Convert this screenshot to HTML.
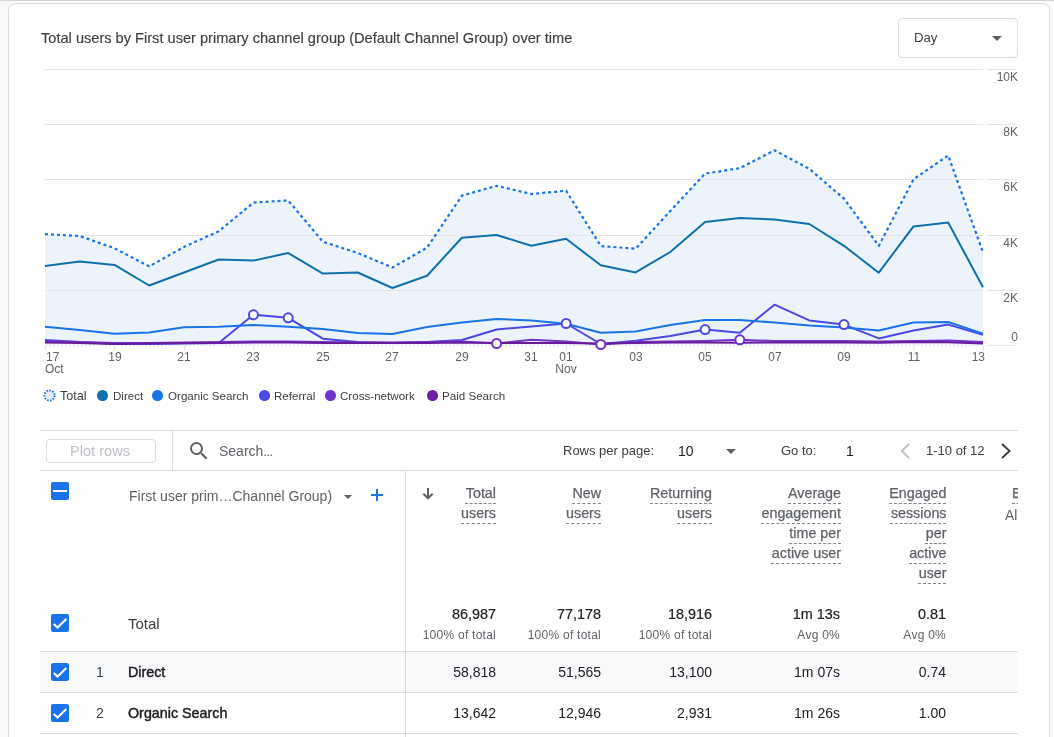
<!DOCTYPE html>
<html><head><meta charset="utf-8">
<style>
*{margin:0;padding:0;box-sizing:border-box}
html,body{width:1054px;height:737px;overflow:hidden;background:#f8f9fa;font-family:"Liberation Sans",sans-serif;color:#3c4043}
.topband{position:absolute;left:0;top:0;width:1054px;height:1px;background:#d3d4d6}
.card{position:absolute;left:8px;top:3px;width:1042px;height:760px;background:#fff;border:1px solid #dadce0;border-radius:8px}
.abs{position:absolute;white-space:nowrap;will-change:transform}
.title{left:41px;top:30px;font-size:14.6px;color:#3c4043;-webkit-text-stroke:0.15px #3c4043}
.daybtn{position:absolute;left:898px;top:18px;width:120px;height:40px;border:1px solid #dadce0;border-radius:4px}
.tri{position:absolute;width:0;height:0;border-left:5px solid transparent;border-right:5px solid transparent;border-top:5px solid #5f6368}
.ylab{font-size:12px;color:#5f6368;text-align:right;width:40px;left:978px}
.xlab{font-size:12px;color:#5f6368;text-align:center;width:30px}
.leg{font-size:11.6px;color:#3c4043;top:389px}
.dot{position:absolute;width:10.6px;height:10.6px;border-radius:50%;top:390.2px}
.hline{position:absolute;height:1px;background:#dadce0}
.vline{position:absolute;width:1px;background:#dadce0}
.cb{position:absolute;width:18px;height:18px;background:#1a73e8;border-radius:2px}
.hdr{font-size:14.3px;color:#5f6368;-webkit-text-stroke:0.25px #5f6368;text-align:right;line-height:20px}
.hdr span{text-decoration:underline dashed #80868b;text-decoration-thickness:1px;text-underline-offset:5px}
.num{font-size:14px;color:#202124;text-align:right}
.b{-webkit-text-stroke:0.2px #202124;font-size:14.4px}
.rowname{font-size:14.3px;color:#202124;-webkit-text-stroke:0.45px #202124}
.sub{font-size:12px;letter-spacing:0.25px;color:#5f6368;text-align:right}
</style></head><body>
<div class="topband"></div>
<div class="card"></div>
<div class="abs title">Total users by First user primary channel group (Default Channel Group) over time</div>
<div class="daybtn"></div>
<div class="abs" style="left:914px;top:30px;font-size:13.2px;color:#3c4043">Day</div>
<div class="tri" style="left:992px;top:36px"></div>
<svg width="1054" height="420" viewBox="0 0 1054 420" style="position:absolute;left:0;top:0">
<path d="M45.0,345.3 L45.0,234.1 L79.7,236.0 L114.5,248.2 L149.2,266.4 L184.0,246.9 L218.7,231.3 L253.4,202.6 L288.2,200.4 L322.9,241.7 L357.7,253.0 L392.4,267.5 L427.1,247.7 L461.9,195.6 L496.6,185.8 L531.4,194.0 L566.1,190.7 L600.8,246.0 L635.6,248.8 L670.3,211.0 L705.1,173.6 L739.8,168.2 L774.5,150.3 L809.3,168.8 L844.0,198.7 L878.8,245.8 L913.5,179.3 L948.2,155.4 L983.0,252.4 L983.0,345.3 Z" fill="#edf3fd"/>
<rect x="45" y="69.0" width="938" height="1" fill="#e2e4e8"/>
<rect x="987" y="69.0" width="30" height="1" fill="#e3e3e3"/>
<rect x="45" y="124.0" width="938" height="1" fill="#e2e4e8"/>
<rect x="987" y="124.0" width="30" height="1" fill="#e3e3e3"/>
<rect x="45" y="179.0" width="938" height="1" fill="#e2e4e8"/>
<rect x="987" y="179.0" width="30" height="1" fill="#e3e3e3"/>
<rect x="45" y="235.0" width="938" height="1" fill="#e2e4e8"/>
<rect x="987" y="235.0" width="30" height="1" fill="#e3e3e3"/>
<rect x="45" y="290.0" width="938" height="1" fill="#e2e4e8"/>
<rect x="987" y="290.0" width="30" height="1" fill="#e3e3e3"/>
<rect x="987" y="344.8" width="30" height="1" fill="#e3e3e3"/>
<line x1="45" y1="345.8" x2="983" y2="345.8" stroke="#e3e5e8" stroke-width="1" stroke-dasharray="2 2"/>
<rect x="44.9" y="345.5" width="1" height="5" fill="#e0e0e0"/>
<rect x="114.4" y="345.5" width="1" height="5" fill="#e0e0e0"/>
<rect x="183.9" y="345.5" width="1" height="5" fill="#e0e0e0"/>
<rect x="253.3" y="345.5" width="1" height="5" fill="#e0e0e0"/>
<rect x="322.8" y="345.5" width="1" height="5" fill="#e0e0e0"/>
<rect x="392.3" y="345.5" width="1" height="5" fill="#e0e0e0"/>
<rect x="461.8" y="345.5" width="1" height="5" fill="#e0e0e0"/>
<rect x="531.3" y="345.5" width="1" height="5" fill="#e0e0e0"/>
<rect x="566.0" y="345.5" width="1" height="5" fill="#e0e0e0"/>
<rect x="635.5" y="345.5" width="1" height="5" fill="#e0e0e0"/>
<rect x="705.0" y="345.5" width="1" height="5" fill="#e0e0e0"/>
<rect x="774.4" y="345.5" width="1" height="5" fill="#e0e0e0"/>
<rect x="843.9" y="345.5" width="1" height="5" fill="#e0e0e0"/>
<rect x="913.4" y="345.5" width="1" height="5" fill="#e0e0e0"/>
<rect x="982.9" y="345.5" width="1" height="5" fill="#e0e0e0"/>
<polyline points="45.0,340.0 79.7,342.0 114.5,344.0 149.2,344.0 184.0,343.5 218.7,343.0 253.4,314.8 288.2,317.8 322.9,338.7 357.7,342.0 392.4,343.0 427.1,342.0 461.9,340.0 496.6,329.5 531.4,326.5 566.1,323.5 600.8,344.0 635.6,340.8 670.3,336.0 705.1,329.6 739.8,332.7 774.5,304.7 809.3,320.4 844.0,324.6 878.8,338.4 913.5,330.6 948.2,324.6 983.0,334.8" fill="none" stroke="#4a48e6" stroke-width="2" stroke-linejoin="round"/>
<polyline points="45.0,341.5 79.7,342.0 114.5,343.0 149.2,343.0 184.0,342.5 218.7,342.0 253.4,341.5 288.2,341.5 322.9,342.0 357.7,342.5 392.4,342.5 427.1,342.0 461.9,341.5 496.6,343.5 531.4,339.7 566.1,341.5 600.8,344.5 635.6,342.0 670.3,341.5 705.1,341.0 739.8,339.8 774.5,341.0 809.3,341.0 844.0,341.0 878.8,341.5 913.5,341.0 948.2,340.5 983.0,342.0" fill="none" stroke="#7232cd" stroke-width="2" stroke-linejoin="round"/>
<polyline points="45.0,342.5 79.7,343.0 114.5,344.0 149.2,343.5 184.0,343.0 218.7,343.0 253.4,342.5 288.2,342.5 322.9,343.0 357.7,343.0 392.4,343.0 427.1,343.0 461.9,342.5 496.6,343.0 531.4,343.0 566.1,343.0 600.8,343.5 635.6,343.0 670.3,342.5 705.1,342.5 739.8,342.7 774.5,342.5 809.3,342.5 844.0,342.5 878.8,342.7 913.5,342.0 948.2,342.3 983.0,343.5" fill="none" stroke="#6a1b9a" stroke-width="2" stroke-linejoin="round"/>
<polyline points="45.0,326.8 79.7,330.0 114.5,333.7 149.2,332.6 184.0,327.2 218.7,326.8 253.4,325.0 288.2,326.8 322.9,329.0 357.7,332.9 392.4,334.0 427.1,327.0 461.9,322.4 496.6,318.9 531.4,320.5 566.1,323.7 600.8,332.8 635.6,331.4 670.3,325.0 705.1,319.9 739.8,319.9 774.5,322.6 809.3,325.5 844.0,327.6 878.8,330.4 913.5,322.5 948.2,322.0 983.0,333.6" fill="none" stroke="#1a73e8" stroke-width="2" stroke-linejoin="round"/>
<polyline points="45.0,266.0 79.7,261.6 114.5,264.9 149.2,285.5 184.0,272.5 218.7,259.5 253.4,260.6 288.2,253.0 322.9,273.6 357.7,272.5 392.4,288.0 427.1,275.7 461.9,237.7 496.6,235.0 531.4,245.8 566.1,238.8 600.8,265.3 635.6,272.4 670.3,252.0 705.1,222.0 739.8,218.0 774.5,219.6 809.3,224.0 844.0,245.8 878.8,272.7 913.5,226.4 948.2,222.5 983.0,287.3" fill="none" stroke="#1170aa" stroke-width="2" stroke-linejoin="round"/>
<polyline points="45.0,234.1 79.7,236.0 114.5,248.2 149.2,266.4 184.0,246.9 218.7,231.3 253.4,202.6 288.2,200.4 322.9,241.7 357.7,253.0 392.4,267.5 427.1,247.7 461.9,195.6 496.6,185.8 531.4,194.0 566.1,190.7 600.8,246.0 635.6,248.8 670.3,211.0 705.1,173.6 739.8,168.2 774.5,150.3 809.3,168.8 844.0,198.7 878.8,245.8 913.5,179.3 948.2,155.4 983.0,252.4" fill="none" stroke="#1a73e8" stroke-width="2.2" stroke-dasharray="3 3" stroke-linejoin="round"/>
<circle cx="253.4" cy="314.8" r="4.5" fill="#fff" stroke="#4a48e6" stroke-width="2"/>
<circle cx="288.2" cy="317.8" r="4.5" fill="#fff" stroke="#4a48e6" stroke-width="2"/>
<circle cx="566.1" cy="323.5" r="4.5" fill="#fff" stroke="#4a48e6" stroke-width="2"/>
<circle cx="705.1" cy="329.6" r="4.5" fill="#fff" stroke="#4a48e6" stroke-width="2"/>
<circle cx="844.0" cy="324.6" r="4.5" fill="#fff" stroke="#4a48e6" stroke-width="2"/>
<circle cx="496.6" cy="343.5" r="4.5" fill="#fff" stroke="#7232cd" stroke-width="2"/>
<circle cx="600.8" cy="344.5" r="4.5" fill="#fff" stroke="#7232cd" stroke-width="2"/>
<circle cx="739.8" cy="339.8" r="4.5" fill="#fff" stroke="#7232cd" stroke-width="2"/>
</svg>
<div class="abs ylab" style="top:70px">10K</div>
<div class="abs ylab" style="top:125px">8K</div>
<div class="abs ylab" style="top:180px">6K</div>
<div class="abs ylab" style="top:236px">4K</div>
<div class="abs ylab" style="top:291px">2K</div>
<div class="abs ylab" style="top:330px">0</div>
<div class="abs xlab" style="left:45.5px;top:350px;text-align:left">17</div>
<div class="abs xlab" style="left:99.5px;top:350px">19</div>
<div class="abs xlab" style="left:169.0px;top:350px">21</div>
<div class="abs xlab" style="left:238.4px;top:350px">23</div>
<div class="abs xlab" style="left:307.9px;top:350px">25</div>
<div class="abs xlab" style="left:377.4px;top:350px">27</div>
<div class="abs xlab" style="left:446.9px;top:350px">29</div>
<div class="abs xlab" style="left:516.4px;top:350px">31</div>
<div class="abs xlab" style="left:551.1px;top:350px">01</div>
<div class="abs xlab" style="left:620.6px;top:350px">03</div>
<div class="abs xlab" style="left:690.1px;top:350px">05</div>
<div class="abs xlab" style="left:759.5px;top:350px">07</div>
<div class="abs xlab" style="left:829.0px;top:350px">09</div>
<div class="abs xlab" style="left:898.5px;top:350px">11</div>
<div class="abs xlab" style="left:954.5px;top:350px;text-align:right">13</div>
<div class="abs xlab" style="left:45px;top:362px;text-align:left">Oct</div>
<div class="abs xlab" style="left:551px;top:362px">Nov</div>
<svg style="position:absolute;left:43px;top:389px" width="13" height="13" viewBox="0 0 13 13"><circle cx="6.5" cy="6.5" r="5.1" fill="#e8eaed" stroke="#1a73e8" stroke-width="1.9" stroke-dasharray="1.55 1.36"/></svg>
<div class="abs leg" style="left:60px;font-size:12.6px;top:388.5px">Total</div>
<div class="dot" style="left:97px;background:#1170aa"></div>
<div class="abs leg" style="left:113px">Direct</div>
<div class="dot" style="left:152px;background:#1a73e8"></div>
<div class="abs leg" style="left:168px">Organic Search</div>
<div class="dot" style="left:259px;background:#4a48e6"></div>
<div class="abs leg" style="left:274px">Referral</div>
<div class="dot" style="left:325px;background:#7232cd"></div>
<div class="abs leg" style="left:340px">Cross-network</div>
<div class="dot" style="left:427px;background:#6e1fa3"></div>
<div class="abs leg" style="left:442px">Paid Search</div>

<!-- toolbar -->
<div class="hline" style="left:40px;top:430px;width:978px"></div>
<div class="hline" style="left:40px;top:470px;width:978px"></div>
<div class="vline" style="left:172px;top:431px;height:39px"></div>
<div style="position:absolute;left:46px;top:439px;width:110px;height:24px;border:1px solid #dadce0;border-radius:4px"></div>
<div class="abs" style="left:70px;top:443px;font-size:14.6px;color:#bdc1c6">Plot rows</div>
<svg class="abs" style="left:187px;top:439px" width="24" height="24" viewBox="0 0 24 24"><path d="M15.5 14h-.79l-.28-.27A6.47 6.47 0 0 0 16 9.5 6.5 6.5 0 1 0 9.5 16c1.61 0 3.09-.59 4.23-1.57l.27.28v.79l5 4.99L20.49 19l-4.99-5zm-6 0C7.01 14 5 11.99 5 9.5S7.01 5 9.5 5 14 7.01 14 9.5 11.99 14 9.5 14z" fill="#5f6368"/></svg>
<div class="abs" style="left:219px;top:443px;font-size:14px;color:#5f6368">Search<span style="letter-spacing:-0.9px">...</span></div>
<div class="abs" style="left:563px;top:443px;font-size:13px;color:#3c4043">Rows per page:</div>
<div class="abs" style="left:678px;top:443px;font-size:14px;color:#202124">10</div>
<div class="tri" style="left:726px;top:449px"></div>
<div class="abs" style="left:781px;top:443px;font-size:13px;color:#3c4043">Go to:</div>
<div class="abs" style="left:846px;top:443px;font-size:14px;color:#202124">1</div>
<div class="abs" style="left:926px;top:443px;font-size:13px;color:#3c4043">1-10 of 12</div>
<svg class="abs" style="left:899px;top:443px" width="12" height="16" viewBox="0 0 12 16"><path d="M10 1L2.8 8L10 15" fill="none" stroke="#bdc1c6" stroke-width="1.9"/></svg>
<svg class="abs" style="left:1000px;top:443px" width="12" height="16" viewBox="0 0 12 16"><path d="M2 1L9.6 8L2 15" fill="none" stroke="#3c4043" stroke-width="1.9"/></svg>

<!-- table -->
<div class="cb" style="left:51px;top:482px"><div style="position:absolute;left:2px;top:8px;width:14px;height:2px;background:#fff"></div></div>
<div class="abs" style="left:129px;top:488px;font-size:14px;color:#5f6368">First user prim…Channel Group)</div>
<div class="tri" style="left:344px;top:494.5px;border-width:4px 4px 0 4px"></div>
<svg class="abs" style="left:371px;top:489px" width="12" height="12" viewBox="0 0 12 12"><path d="M6 0V12M0 6H12" stroke="#1a73e8" stroke-width="2"/></svg>
<svg style="position:absolute;left:415px;top:480px" width="30" height="25" viewBox="0 0 30 25"><path d="M13 8V18M8.3 13.8L13 18.3L17.7 13.8" fill="none" stroke="#5f6368" stroke-width="2"/></svg>

<div class="hline" style="left:40px;top:651px;width:978px"></div>
<div style="position:absolute;left:40px;top:652px;width:978px;height:40px;background:#f8f9fa"></div>
<div class="hline" style="left:40px;top:692px;width:978px"></div>
<div class="hline" style="left:40px;top:733px;width:978px"></div>

<!-- headers -->
<div class="abs hdr" style="left:405px;top:483px;width:91px"><span>Total</span><br><span>users</span></div>
<div class="abs hdr" style="left:500px;top:483px;width:101px"><span>New</span><br><span>users</span></div>
<div class="abs hdr" style="left:610px;top:483px;width:102px"><span>Returning</span><br><span>users</span></div>
<div class="abs hdr" style="left:720px;top:483px;width:121px"><span>Average</span><br><span>engagement</span><br><span>time per</span><br><span>active user</span></div>
<div class="abs hdr" style="left:850px;top:483px;width:96.5px"><span>Engaged</span><br><span>sessions</span><br><span>per</span><br><span>active</span><br><span>user</span></div>
<div style="position:absolute;left:1005px;top:471px;width:13px;height:60px;overflow:hidden">
<div class="abs hdr" style="left:7px;top:12px;text-align:left"><span>Event</span></div>
<div class="abs" style="left:0px;top:37px;font-size:13.8px;color:#5f6368">All events</div>
</div>

<!-- totals -->
<div class="cb" style="left:51px;top:614px"><svg width="18" height="18" viewBox="0 0 18 18" style="position:absolute;left:0;top:0"><path d="M2.7 9.9 L6.6 13.5 L15.3 4.9" fill="none" stroke="#fff" stroke-width="2.1"/></svg></div>
<div class="abs" style="left:128px;top:615px;font-size:15px;color:#3c4043">Total</div>
<div class="abs num b" style="left:396px;top:605.5px;width:100px">86,987</div>
<div class="abs sub" style="left:396px;top:628px;width:100px">100% of total</div>
<div class="abs num b" style="left:501px;top:605.5px;width:100px">77,178</div>
<div class="abs sub" style="left:501px;top:628px;width:100px">100% of total</div>
<div class="abs num b" style="left:612px;top:605.5px;width:100px">18,916</div>
<div class="abs sub" style="left:612px;top:628px;width:100px">100% of total</div>
<div class="abs num b" style="left:740px;top:605.5px;width:100px">1m 13s</div>
<div class="abs sub" style="left:740px;top:628px;width:100px">Avg 0%</div>
<div class="abs num b" style="left:846px;top:605.5px;width:100px">0.81</div>
<div class="abs sub" style="left:846px;top:628px;width:100px">Avg 0%</div>

<!-- row 1 -->
<div class="cb" style="left:51px;top:663px"><svg width="18" height="18" viewBox="0 0 18 18" style="position:absolute;left:0;top:0"><path d="M2.7 9.9 L6.6 13.5 L15.3 4.9" fill="none" stroke="#fff" stroke-width="2.1"/></svg></div>
<div class="abs" style="left:96px;top:664px;font-size:14px;color:#3c4043">1</div>
<div class="abs rowname" style="left:128px;top:664px">Direct</div>
<div class="abs num" style="left:396px;top:664px;width:100px">58,818</div>
<div class="abs num" style="left:501px;top:664px;width:100px">51,565</div>
<div class="abs num" style="left:612px;top:664px;width:100px">13,100</div>
<div class="abs num" style="left:740px;top:664px;width:100px">1m 07s</div>
<div class="abs num" style="left:846px;top:664px;width:100px">0.74</div>
<!-- row 2 -->
<div class="cb" style="left:51px;top:704px"><svg width="18" height="18" viewBox="0 0 18 18" style="position:absolute;left:0;top:0"><path d="M2.7 9.9 L6.6 13.5 L15.3 4.9" fill="none" stroke="#fff" stroke-width="2.1"/></svg></div>
<div class="abs" style="left:96px;top:705px;font-size:14px;color:#3c4043">2</div>
<div class="abs rowname" style="left:128px;top:705px">Organic Search</div>
<div class="abs num" style="left:396px;top:705px;width:100px">13,642</div>
<div class="abs num" style="left:501px;top:705px;width:100px">12,946</div>
<div class="abs num" style="left:612px;top:705px;width:100px">2,931</div>
<div class="abs num" style="left:740px;top:705px;width:100px">1m 26s</div>
<div class="abs num" style="left:846px;top:705px;width:100px">1.00</div>

<div class="vline" style="left:405px;top:471px;height:270px"></div>
</body></html>
